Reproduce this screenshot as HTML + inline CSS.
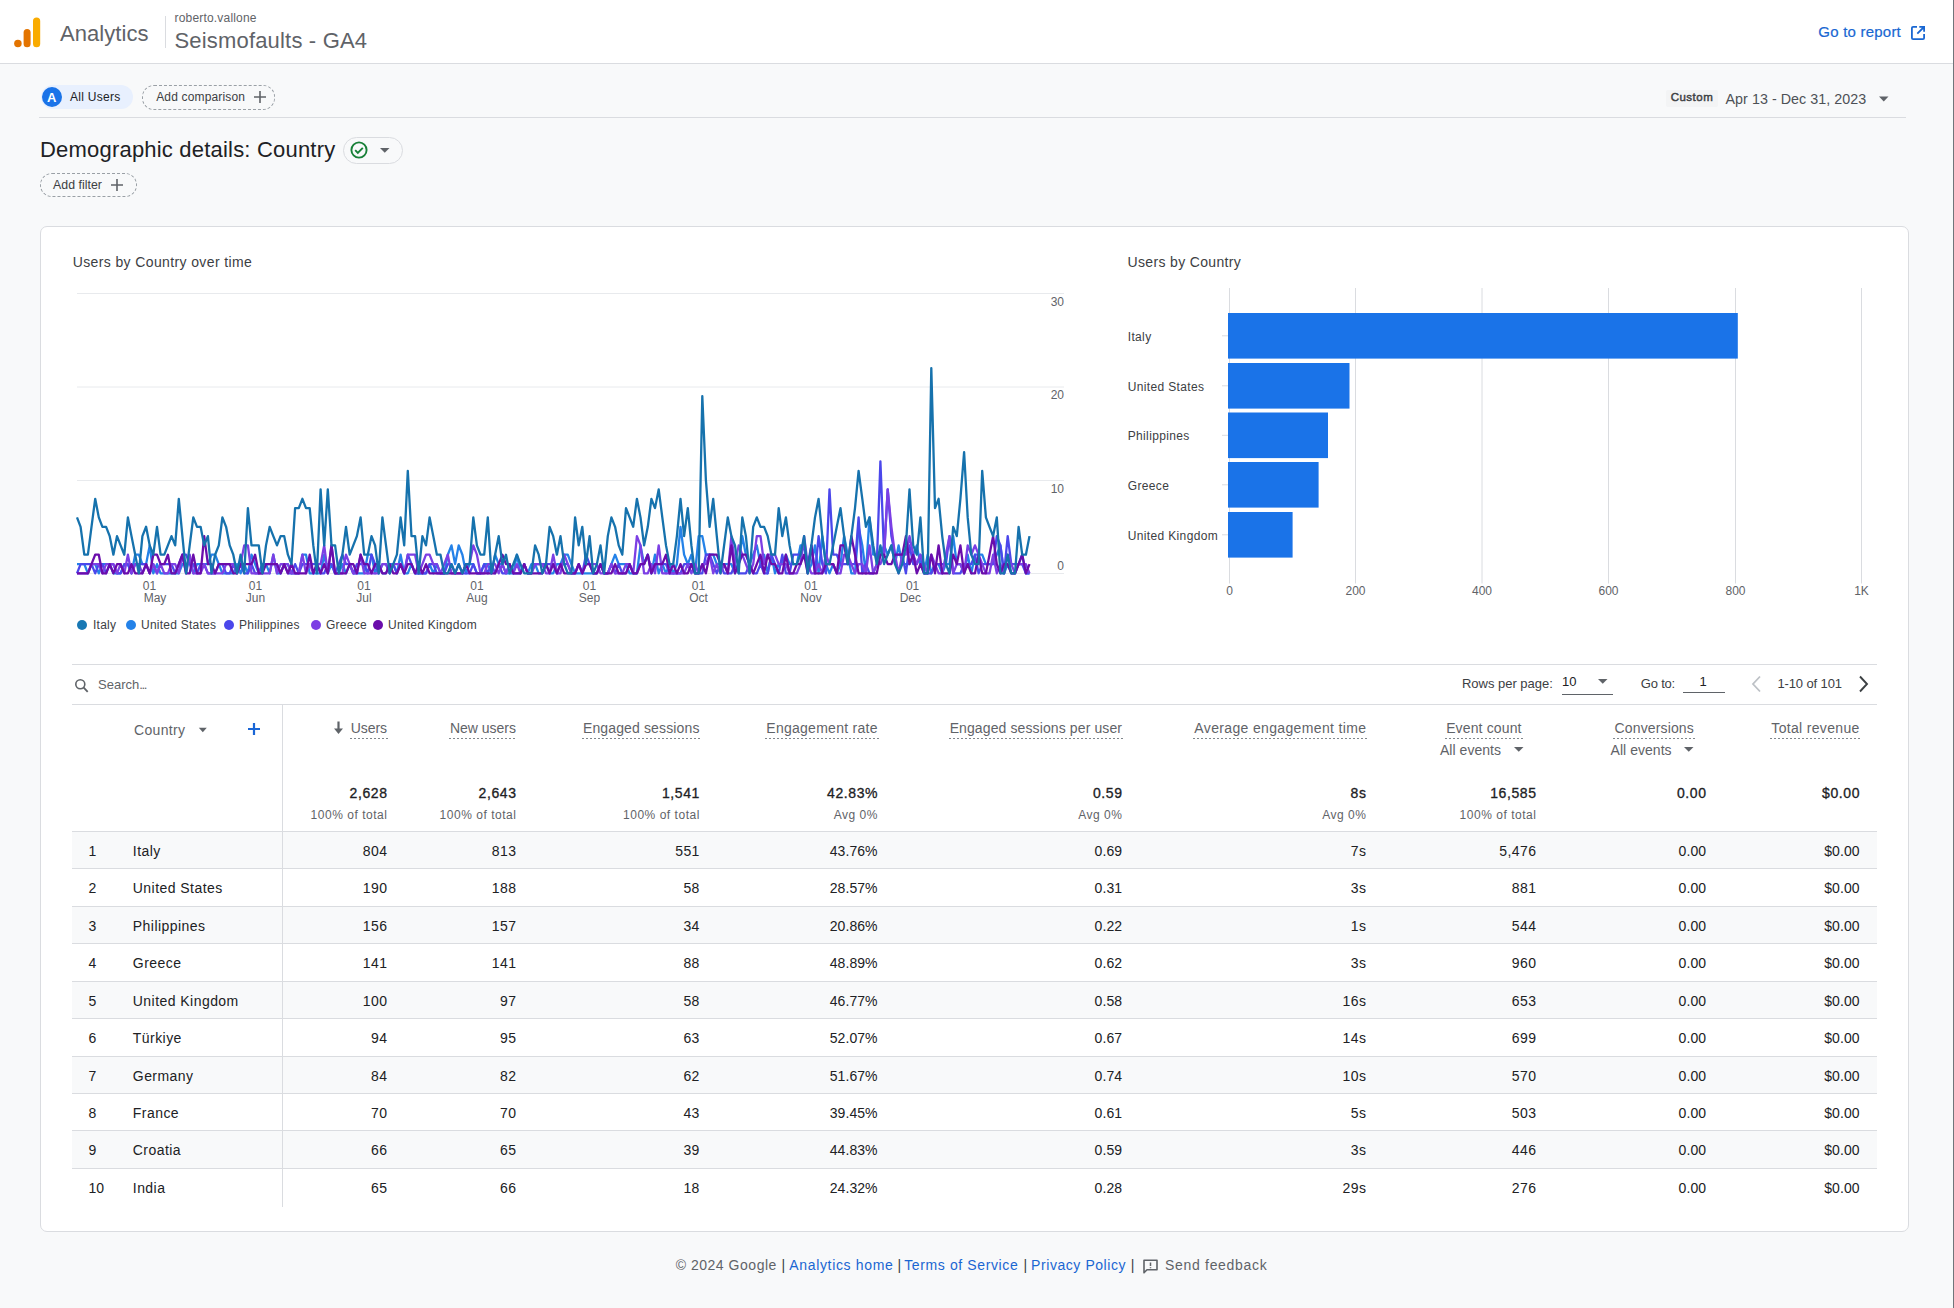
<!DOCTYPE html>
<html><head><meta charset="utf-8"><title>Demographic details: Country - Analytics</title>
<style>
html,body{margin:0;padding:0;}
body{width:1954px;height:1308px;overflow:hidden;position:relative;background:#f8f9fa;font-family:"Liberation Sans",sans-serif;}
.t{position:absolute;white-space:nowrap;}
#hdr{position:absolute;left:0;top:0;width:1954px;height:63px;background:#fff;border-bottom:1px solid #dadce0;}
</style></head><body>
<div id="hdr"></div>
<svg style="position:absolute;left:0;top:0" width="60" height="60">
<circle cx="17.9" cy="43.6" r="3.75" fill="#E37400"/>
<rect x="23.6" y="29" width="7" height="18.3" rx="3.5" fill="#E37400"/>
<rect x="33" y="17.5" width="7.2" height="29.8" rx="3.6" fill="#F9AB00"/>
</svg>
<div class="t" style="top:22.97px;font-size:22px;line-height:22px;color:#5f6368;font-weight:400;letter-spacing:0.052px;left:60.00px;">Analytics</div>

<div style="position:absolute;left:164.5px;top:16px;width:1px;height:32px;background:#dadce0"></div>
<div class="t" style="top:11.84px;font-size:12px;line-height:12px;color:#5f6368;font-weight:400;letter-spacing:0.188px;left:174.50px;">roberto.vallone</div>

<div class="t" style="top:30.17px;font-size:22px;line-height:22px;color:#5f6368;font-weight:400;letter-spacing:0.177px;left:174.50px;">Seismofaults - GA4</div>

<div class="t" style="top:24.40px;font-size:15px;line-height:15px;color:#1967d2;font-weight:400;letter-spacing:0.222px;left:1818.30px;-webkit-text-stroke:0.2px #1967d2;">Go to report</div>

<svg style="position:absolute;left:1910px;top:25px" width="16" height="16" viewBox="0 0 16 16">
<path d="M7 1.9H3.1a1.2 1.2 0 0 0-1.2 1.2v9.8a1.2 1.2 0 0 0 1.2 1.2h9.8a1.2 1.2 0 0 0 1.2-1.2V9" fill="none" stroke="#1967d2" stroke-width="1.8"/>
<path d="M9.3 1.9h4.8v4.8M14 2L7.3 8.7" fill="none" stroke="#1967d2" stroke-width="1.8"/>
</svg>
<div style="position:absolute;left:1953px;top:0;width:1px;height:1308px;background:#70757a"></div>
<div style="position:absolute;left:41px;top:85px;width:92px;height:24px;border-radius:12px;background:#e8f0fe"></div>
<div style="position:absolute;left:41.8px;top:87.2px;width:20px;height:20px;border-radius:10px;background:#1a73e8"></div>
<div class="t" style="top:90.99px;font-size:13px;line-height:13px;color:#ffffff;font-weight:700;left:-448.20px;width:1000px;text-align:center;">A</div>

<div class="t" style="top:91.14px;font-size:12px;line-height:12px;color:#202124;font-weight:400;letter-spacing:0.277px;left:70.00px;">All Users</div>

<div style="position:absolute;left:142px;top:85px;width:131px;height:23px;border-radius:12px;border:1px dashed #9aa0a6"></div>
<div class="t" style="top:91.14px;font-size:12px;line-height:12px;color:#3c4043;font-weight:400;letter-spacing:0.163px;left:156.20px;">Add comparison</div>

<svg style="position:absolute;left:253px;top:90px" width="14" height="14"><path d="M7 1v12M1 7h12" stroke="#5f6368" stroke-width="1.6"/></svg>
<div style="position:absolute;left:39px;top:117px;width:1867px;height:1px;background:#dadce0"></div>
<div style="position:absolute;left:1666px;top:89.5px;width:52px;height:17.5px;border-radius:2px;background:#f3f4f5"></div>
<div class="t" style="top:91.66px;font-size:11.5px;line-height:11.5px;color:#3c4043;font-weight:400;letter-spacing:0.480px;left:1670.70px;-webkit-text-stroke:0.45px #3c4043;">Custom</div>

<div class="t" style="top:92.09px;font-size:14.3px;line-height:14.3px;color:#4d5156;font-weight:400;letter-spacing:0.042px;left:1725.50px;">Apr 13 - Dec 31, 2023</div>

<svg style="position:absolute;left:1878px;top:95px" width="12" height="8"><path d="M1 1.5h9.5L5.75 6.5z" fill="#5f6368"/></svg>
<div class="t" style="top:139.37px;font-size:22px;line-height:22px;color:#202124;font-weight:400;letter-spacing:0.200px;left:40.00px;">Demographic details: Country</div>

<div style="position:absolute;left:342.5px;top:136.5px;width:60px;height:27.5px;border-radius:14px;border:1px solid #dadce0;box-sizing:border-box"></div>
<svg style="position:absolute;left:349px;top:140px" width="20" height="20" viewBox="0 0 20 20">
<circle cx="10" cy="10" r="7.6" fill="none" stroke="#188038" stroke-width="1.9"/>
<path d="M6.2 10.2l2.6 2.6 5-5" fill="none" stroke="#188038" stroke-width="1.9"/></svg>
<svg style="position:absolute;left:379px;top:147px" width="12" height="7"><path d="M1 1h9.5L5.75 5.8z" fill="#5f6368"/></svg>
<div style="position:absolute;left:40px;top:173px;width:95px;height:21.5px;border-radius:12px;border:1px dashed #9aa0a6"></div>
<div class="t" style="top:179.49px;font-size:12.3px;line-height:12.3px;color:#3c4043;font-weight:400;letter-spacing:0.046px;left:53.00px;">Add filter</div>

<svg style="position:absolute;left:110px;top:178px" width="14" height="14"><path d="M7 1v12M1 7h12" stroke="#5f6368" stroke-width="1.6"/></svg>
<div style="position:absolute;left:40px;top:226px;width:1869px;height:1006px;box-sizing:border-box;border:1px solid #dadce0;border-radius:7px;background:#fff"></div>
<div class="t" style="top:254.95px;font-size:14px;line-height:14px;color:#3c4043;font-weight:400;letter-spacing:0.380px;left:72.70px;">Users by Country over time</div>

<div class="t" style="top:254.95px;font-size:14px;line-height:14px;color:#3c4043;font-weight:400;letter-spacing:0.347px;left:1127.50px;">Users by Country</div>

<svg style="position:absolute;left:0;top:0" width="1954" height="700">
<line x1="77" y1="293.5" x2="1064" y2="293.5" stroke="#e8eaed" stroke-width="1"/>
<line x1="77" y1="387" x2="1064" y2="387" stroke="#e8eaed" stroke-width="1"/>
<line x1="77" y1="480.5" x2="1064" y2="480.5" stroke="#e8eaed" stroke-width="1"/>
<line x1="77" y1="573.5" x2="1064" y2="573.5" stroke="#e8eaed" stroke-width="1"/>
<polyline points="77.0,564.1 80.6,564.1 84.3,564.1 87.9,573.4 91.5,564.1 95.2,564.1 98.8,573.4 102.4,564.1 106.1,564.1 109.7,564.1 113.4,573.4 117.0,573.4 120.6,573.4 124.3,564.1 127.9,564.1 131.5,573.4 135.2,554.7 138.8,554.7 142.4,564.1 146.1,564.1 149.7,545.4 153.3,573.4 157.0,564.1 160.6,573.4 164.3,573.4 167.9,573.4 171.5,573.4 175.2,573.4 178.8,573.4 182.4,564.1 186.1,564.1 189.7,564.1 193.3,573.4 197.0,564.1 200.6,564.1 204.2,564.1 207.9,564.1 211.5,554.7 215.1,554.7 218.8,564.1 222.4,573.4 226.1,573.4 229.7,573.4 233.3,573.4 237.0,564.1 240.6,573.4 244.2,564.1 247.9,573.4 251.5,554.7 255.1,564.1 258.8,573.4 262.4,564.1 266.0,564.1 269.7,573.4 273.3,554.7 277.0,573.4 280.6,573.4 284.2,564.1 287.9,564.1 291.5,573.4 295.1,573.4 298.8,573.4 302.4,554.7 306.0,554.7 309.7,573.4 313.3,573.4 316.9,573.4 320.6,573.4 324.2,554.7 327.8,573.4 331.5,564.1 335.1,573.4 338.8,573.4 342.4,564.1 346.0,573.4 349.7,564.1 353.3,573.4 356.9,573.4 360.6,573.4 364.2,573.4 367.8,554.7 371.5,554.7 375.1,573.4 378.7,564.1 382.4,573.4 386.0,573.4 389.7,564.1 393.3,564.1 396.9,573.4 400.6,554.7 404.2,573.4 407.8,573.4 411.5,564.1 415.1,573.4 418.7,573.4 422.4,573.4 426.0,573.4 429.6,564.1 433.3,573.4 436.9,564.1 440.5,573.4 444.2,573.4 447.8,554.7 451.5,545.4 455.1,564.1 458.7,545.4 462.4,554.7 466.0,573.4 469.6,564.1 473.3,564.1 476.9,573.4 480.5,573.4 484.2,564.1 487.8,564.1 491.4,573.4 495.1,554.7 498.7,564.1 502.4,564.1 506.0,573.4 509.6,573.4 513.3,573.4 516.9,554.7 520.5,573.4 524.2,564.1 527.8,573.4 531.4,564.1 535.1,564.1 538.7,573.4 542.3,573.4 546.0,564.1 549.6,573.4 553.2,573.4 556.9,564.1 560.5,564.1 564.2,554.7 567.8,554.7 571.4,564.1 575.1,573.4 578.7,573.4 582.3,573.4 586.0,573.4 589.6,573.4 593.2,573.4 596.9,573.4 600.5,564.1 604.1,573.4 607.8,573.4 611.4,564.1 615.1,554.7 618.7,564.1 622.3,564.1 626.0,564.1 629.6,573.4 633.2,573.4 636.9,573.4 640.5,545.4 644.1,564.1 647.8,554.7 651.4,573.4 655.0,554.7 658.7,573.4 662.3,564.1 666.0,573.4 669.6,564.1 673.2,573.4 676.9,564.1 680.5,526.8 684.1,554.7 687.8,564.1 691.4,554.7 695.0,573.4 698.7,536.1 702.3,536.1 705.9,554.7 709.6,554.7 713.2,554.7 716.8,564.1 720.5,564.1 724.1,564.1 727.8,564.1 731.4,564.1 735.0,573.4 738.7,564.1 742.3,536.1 745.9,554.7 749.6,564.1 753.2,554.7 756.8,545.4 760.5,564.1 764.1,554.7 767.7,573.4 771.4,554.7 775.0,573.4 778.7,564.1 782.3,564.1 785.9,554.7 789.6,564.1 793.2,564.1 796.8,564.1 800.5,545.4 804.1,545.4 807.7,573.4 811.4,564.1 815.0,545.4 818.6,573.4 822.3,536.1 825.9,564.1 829.5,573.4 833.2,564.1 836.8,573.4 840.5,564.1 844.1,536.1 847.7,554.7 851.4,573.4 855.0,573.4 858.6,526.8 862.3,545.4 865.9,573.4 869.5,517.4 873.2,554.7 876.8,554.7 880.4,554.7 884.1,545.4 887.7,554.7 891.4,545.4 895.0,564.1 898.6,545.4 902.3,564.1 905.9,564.1 909.5,564.1 913.2,554.7 916.8,545.4 920.4,564.1 924.1,573.4 927.7,554.7 931.3,573.4 935.0,564.1 938.6,564.1 942.2,573.4 945.9,564.1 949.5,564.1 953.2,536.1 956.8,564.1 960.4,564.1 964.1,573.4 967.7,554.7 971.3,573.4 975.0,554.7 978.6,554.7 982.2,554.7 985.9,564.1 989.5,564.1 993.1,564.1 996.8,554.7 1000.4,545.4 1004.1,573.4 1007.7,564.1 1011.3,573.4 1015.0,573.4 1018.6,564.1 1022.2,554.7 1025.9,573.4 1029.5,573.4" fill="none" stroke="#2482e8" stroke-width="2.3" stroke-linejoin="round"/>
<polyline points="77.0,573.4 80.6,564.1 84.3,564.1 87.9,564.1 91.5,564.1 95.2,573.4 98.8,564.1 102.4,564.1 106.1,573.4 109.7,564.1 113.4,564.1 117.0,573.4 120.6,573.4 124.3,564.1 127.9,564.1 131.5,573.4 135.2,564.1 138.8,564.1 142.4,564.1 146.1,564.1 149.7,573.4 153.3,564.1 157.0,573.4 160.6,564.1 164.3,564.1 167.9,564.1 171.5,564.1 175.2,573.4 178.8,564.1 182.4,554.7 186.1,554.7 189.7,564.1 193.3,564.1 197.0,573.4 200.6,564.1 204.2,564.1 207.9,573.4 211.5,573.4 215.1,573.4 218.8,564.1 222.4,564.1 226.1,573.4 229.7,573.4 233.3,564.1 237.0,573.4 240.6,564.1 244.2,573.4 247.9,573.4 251.5,564.1 255.1,573.4 258.8,573.4 262.4,564.1 266.0,564.1 269.7,564.1 273.3,564.1 277.0,564.1 280.6,573.4 284.2,564.1 287.9,573.4 291.5,573.4 295.1,564.1 298.8,573.4 302.4,564.1 306.0,564.1 309.7,564.1 313.3,564.1 316.9,564.1 320.6,573.4 324.2,573.4 327.8,564.1 331.5,564.1 335.1,573.4 338.8,564.1 342.4,554.7 346.0,564.1 349.7,564.1 353.3,573.4 356.9,564.1 360.6,564.1 364.2,564.1 367.8,573.4 371.5,554.7 375.1,564.1 378.7,573.4 382.4,564.1 386.0,564.1 389.7,573.4 393.3,564.1 396.9,573.4 400.6,564.1 404.2,573.4 407.8,554.7 411.5,564.1 415.1,573.4 418.7,573.4 422.4,573.4 426.0,573.4 429.6,564.1 433.3,564.1 436.9,573.4 440.5,573.4 444.2,573.4 447.8,564.1 451.5,564.1 455.1,573.4 458.7,564.1 462.4,573.4 466.0,573.4 469.6,573.4 473.3,564.1 476.9,573.4 480.5,573.4 484.2,564.1 487.8,573.4 491.4,564.1 495.1,573.4 498.7,564.1 502.4,573.4 506.0,573.4 509.6,564.1 513.3,573.4 516.9,573.4 520.5,573.4 524.2,564.1 527.8,573.4 531.4,573.4 535.1,564.1 538.7,564.1 542.3,564.1 546.0,564.1 549.6,564.1 553.2,564.1 556.9,573.4 560.5,564.1 564.2,564.1 567.8,564.1 571.4,573.4 575.1,573.4 578.7,564.1 582.3,573.4 586.0,554.7 589.6,564.1 593.2,573.4 596.9,573.4 600.5,564.1 604.1,573.4 607.8,573.4 611.4,564.1 615.1,573.4 618.7,564.1 622.3,573.4 626.0,573.4 629.6,564.1 633.2,573.4 636.9,573.4 640.5,564.1 644.1,564.1 647.8,554.7 651.4,573.4 655.0,564.1 658.7,564.1 662.3,564.1 666.0,564.1 669.6,573.4 673.2,573.4 676.9,573.4 680.5,573.4 684.1,564.1 687.8,564.1 691.4,564.1 695.0,573.4 698.7,573.4 702.3,573.4 705.9,554.7 709.6,554.7 713.2,564.1 716.8,573.4 720.5,564.1 724.1,573.4 727.8,573.4 731.4,573.4 735.0,564.1 738.7,573.4 742.3,573.4 745.9,573.4 749.6,564.1 753.2,573.4 756.8,573.4 760.5,564.1 764.1,573.4 767.7,573.4 771.4,554.7 775.0,564.1 778.7,573.4 782.3,554.7 785.9,573.4 789.6,573.4 793.2,554.7 796.8,554.7 800.5,554.7 804.1,545.4 807.7,564.1 811.4,545.4 815.0,573.4 818.6,536.1 822.3,564.1 825.9,573.4 829.5,489.4 833.2,554.7 836.8,554.7 840.5,564.1 844.1,564.1 847.7,564.1 851.4,564.1 855.0,564.1 858.6,517.4 862.3,573.4 865.9,564.1 869.5,573.4 873.2,573.4 876.8,564.1 880.4,461.4 884.1,554.7 887.7,489.4 891.4,536.1 895.0,554.7 898.6,554.7 902.3,554.7 905.9,573.4 909.5,545.4 913.2,564.1 916.8,564.1 920.4,554.7 924.1,573.4 927.7,573.4 931.3,573.4 935.0,564.1 938.6,564.1 942.2,564.1 945.9,564.1 949.5,536.1 953.2,573.4 956.8,573.4 960.4,573.4 964.1,564.1 967.7,564.1 971.3,564.1 975.0,554.7 978.6,573.4 982.2,564.1 985.9,564.1 989.5,564.1 993.1,564.1 996.8,536.1 1000.4,545.4 1004.1,573.4 1007.7,536.1 1011.3,564.1 1015.0,564.1 1018.6,564.1 1022.2,564.1 1025.9,573.4 1029.5,573.4" fill="none" stroke="#4b47eb" stroke-width="2.3" stroke-linejoin="round"/>
<polyline points="77.0,573.4 80.6,573.4 84.3,573.4 87.9,573.4 91.5,564.1 95.2,564.1 98.8,564.1 102.4,573.4 106.1,564.1 109.7,564.1 113.4,564.1 117.0,573.4 120.6,564.1 124.3,573.4 127.9,554.7 131.5,573.4 135.2,564.1 138.8,564.1 142.4,573.4 146.1,564.1 149.7,573.4 153.3,564.1 157.0,573.4 160.6,564.1 164.3,573.4 167.9,573.4 171.5,564.1 175.2,564.1 178.8,573.4 182.4,554.7 186.1,573.4 189.7,554.7 193.3,573.4 197.0,573.4 200.6,573.4 204.2,564.1 207.9,573.4 211.5,573.4 215.1,573.4 218.8,573.4 222.4,573.4 226.1,564.1 229.7,564.1 233.3,564.1 237.0,573.4 240.6,564.1 244.2,545.4 247.9,545.4 251.5,573.4 255.1,573.4 258.8,573.4 262.4,573.4 266.0,573.4 269.7,573.4 273.3,554.7 277.0,573.4 280.6,564.1 284.2,564.1 287.9,564.1 291.5,573.4 295.1,573.4 298.8,573.4 302.4,554.7 306.0,573.4 309.7,564.1 313.3,573.4 316.9,564.1 320.6,564.1 324.2,545.4 327.8,573.4 331.5,545.4 335.1,573.4 338.8,573.4 342.4,573.4 346.0,554.7 349.7,564.1 353.3,573.4 356.9,573.4 360.6,554.7 364.2,573.4 367.8,573.4 371.5,573.4 375.1,573.4 378.7,573.4 382.4,564.1 386.0,564.1 389.7,573.4 393.3,564.1 396.9,564.1 400.6,564.1 404.2,573.4 407.8,554.7 411.5,554.7 415.1,554.7 418.7,573.4 422.4,564.1 426.0,554.7 429.6,554.7 433.3,564.1 436.9,564.1 440.5,573.4 444.2,564.1 447.8,554.7 451.5,573.4 455.1,573.4 458.7,573.4 462.4,573.4 466.0,564.1 469.6,564.1 473.3,545.4 476.9,554.7 480.5,573.4 484.2,573.4 487.8,564.1 491.4,564.1 495.1,564.1 498.7,573.4 502.4,564.1 506.0,573.4 509.6,564.1 513.3,573.4 516.9,564.1 520.5,573.4 524.2,564.1 527.8,573.4 531.4,573.4 535.1,564.1 538.7,564.1 542.3,564.1 546.0,573.4 549.6,573.4 553.2,554.7 556.9,573.4 560.5,573.4 564.2,554.7 567.8,564.1 571.4,573.4 575.1,573.4 578.7,564.1 582.3,573.4 586.0,564.1 589.6,564.1 593.2,564.1 596.9,564.1 600.5,573.4 604.1,573.4 607.8,573.4 611.4,564.1 615.1,573.4 618.7,573.4 622.3,573.4 626.0,564.1 629.6,564.1 633.2,573.4 636.9,536.1 640.5,545.4 644.1,573.4 647.8,573.4 651.4,564.1 655.0,573.4 658.7,545.4 662.3,573.4 666.0,573.4 669.6,573.4 673.2,573.4 676.9,573.4 680.5,573.4 684.1,573.4 687.8,564.1 691.4,573.4 695.0,564.1 698.7,573.4 702.3,564.1 705.9,564.1 709.6,554.7 713.2,573.4 716.8,564.1 720.5,573.4 724.1,564.1 727.8,573.4 731.4,536.1 735.0,564.1 738.7,545.4 742.3,554.7 745.9,564.1 749.6,573.4 753.2,564.1 756.8,536.1 760.5,536.1 764.1,564.1 767.7,554.7 771.4,554.7 775.0,554.7 778.7,564.1 782.3,564.1 785.9,564.1 789.6,573.4 793.2,573.4 796.8,573.4 800.5,564.1 804.1,536.1 807.7,564.1 811.4,573.4 815.0,573.4 818.6,564.1 822.3,573.4 825.9,554.7 829.5,564.1 833.2,564.1 836.8,573.4 840.5,573.4 844.1,554.7 847.7,554.7 851.4,564.1 855.0,573.4 858.6,564.1 862.3,564.1 865.9,573.4 869.5,545.4 873.2,573.4 876.8,564.1 880.4,564.1 884.1,554.7 887.7,489.4 891.4,526.8 895.0,554.7 898.6,573.4 902.3,554.7 905.9,554.7 909.5,536.1 913.2,554.7 916.8,564.1 920.4,554.7 924.1,564.1 927.7,573.4 931.3,554.7 935.0,564.1 938.6,573.4 942.2,573.4 945.9,554.7 949.5,536.1 953.2,573.4 956.8,564.1 960.4,564.1 964.1,573.4 967.7,545.4 971.3,554.7 975.0,545.4 978.6,554.7 982.2,564.1 985.9,573.4 989.5,573.4 993.1,554.7 996.8,573.4 1000.4,564.1 1004.1,573.4 1007.7,554.7 1011.3,564.1 1015.0,573.4 1018.6,564.1 1022.2,564.1 1025.9,564.1 1029.5,573.4" fill="none" stroke="#7c3fe4" stroke-width="2.3" stroke-linejoin="round"/>
<polyline points="77.0,573.4 80.6,573.4 84.3,573.4 87.9,573.4 91.5,564.1 95.2,554.7 98.8,554.7 102.4,573.4 106.1,573.4 109.7,564.1 113.4,573.4 117.0,564.1 120.6,564.1 124.3,573.4 127.9,573.4 131.5,564.1 135.2,573.4 138.8,573.4 142.4,573.4 146.1,564.1 149.7,573.4 153.3,554.7 157.0,554.7 160.6,564.1 164.3,564.1 167.9,554.7 171.5,573.4 175.2,573.4 178.8,564.1 182.4,554.7 186.1,573.4 189.7,573.4 193.3,554.7 197.0,573.4 200.6,573.4 204.2,536.1 207.9,564.1 211.5,564.1 215.1,573.4 218.8,564.1 222.4,564.1 226.1,564.1 229.7,564.1 233.3,573.4 237.0,573.4 240.6,564.1 244.2,564.1 247.9,564.1 251.5,564.1 255.1,554.7 258.8,573.4 262.4,573.4 266.0,564.1 269.7,564.1 273.3,564.1 277.0,564.1 280.6,573.4 284.2,564.1 287.9,573.4 291.5,564.1 295.1,573.4 298.8,573.4 302.4,573.4 306.0,573.4 309.7,554.7 313.3,573.4 316.9,564.1 320.6,573.4 324.2,564.1 327.8,573.4 331.5,545.4 335.1,573.4 338.8,573.4 342.4,573.4 346.0,573.4 349.7,564.1 353.3,564.1 356.9,573.4 360.6,554.7 364.2,564.1 367.8,564.1 371.5,573.4 375.1,564.1 378.7,564.1 382.4,573.4 386.0,573.4 389.7,564.1 393.3,573.4 396.9,573.4 400.6,564.1 404.2,573.4 407.8,564.1 411.5,564.1 415.1,573.4 418.7,564.1 422.4,573.4 426.0,564.1 429.6,573.4 433.3,573.4 436.9,573.4 440.5,573.4 444.2,573.4 447.8,573.4 451.5,573.4 455.1,573.4 458.7,573.4 462.4,573.4 466.0,564.1 469.6,573.4 473.3,573.4 476.9,573.4 480.5,573.4 484.2,573.4 487.8,573.4 491.4,573.4 495.1,573.4 498.7,564.1 502.4,554.7 506.0,564.1 509.6,564.1 513.3,573.4 516.9,573.4 520.5,573.4 524.2,564.1 527.8,573.4 531.4,573.4 535.1,573.4 538.7,573.4 542.3,573.4 546.0,564.1 549.6,573.4 553.2,564.1 556.9,573.4 560.5,564.1 564.2,573.4 567.8,573.4 571.4,573.4 575.1,573.4 578.7,564.1 582.3,573.4 586.0,564.1 589.6,564.1 593.2,573.4 596.9,573.4 600.5,564.1 604.1,573.4 607.8,573.4 611.4,573.4 615.1,564.1 618.7,573.4 622.3,573.4 626.0,573.4 629.6,564.1 633.2,573.4 636.9,573.4 640.5,564.1 644.1,564.1 647.8,554.7 651.4,573.4 655.0,564.1 658.7,564.1 662.3,564.1 666.0,554.7 669.6,573.4 673.2,564.1 676.9,573.4 680.5,564.1 684.1,573.4 687.8,573.4 691.4,564.1 695.0,573.4 698.7,573.4 702.3,564.1 705.9,573.4 709.6,554.7 713.2,554.7 716.8,554.7 720.5,564.1 724.1,564.1 727.8,573.4 731.4,545.4 735.0,573.4 738.7,564.1 742.3,554.7 745.9,554.7 749.6,564.1 753.2,573.4 756.8,564.1 760.5,554.7 764.1,573.4 767.7,554.7 771.4,564.1 775.0,564.1 778.7,573.4 782.3,573.4 785.9,554.7 789.6,573.4 793.2,573.4 796.8,564.1 800.5,564.1 804.1,554.7 807.7,573.4 811.4,545.4 815.0,573.4 818.6,573.4 822.3,573.4 825.9,564.1 829.5,564.1 833.2,564.1 836.8,573.4 840.5,545.4 844.1,545.4 847.7,564.1 851.4,536.1 855.0,554.7 858.6,573.4 862.3,573.4 865.9,573.4 869.5,573.4 873.2,573.4 876.8,573.4 880.4,554.7 884.1,554.7 887.7,564.1 891.4,564.1 895.0,554.7 898.6,554.7 902.3,554.7 905.9,536.1 909.5,564.1 913.2,554.7 916.8,573.4 920.4,564.1 924.1,573.4 927.7,573.4 931.3,554.7 935.0,573.4 938.6,545.4 942.2,573.4 945.9,573.4 949.5,573.4 953.2,554.7 956.8,564.1 960.4,545.4 964.1,573.4 967.7,564.1 971.3,573.4 975.0,573.4 978.6,554.7 982.2,573.4 985.9,573.4 989.5,554.7 993.1,536.1 996.8,564.1 1000.4,573.4 1004.1,564.1 1007.7,564.1 1011.3,573.4 1015.0,573.4 1018.6,564.1 1022.2,554.7 1025.9,573.4 1029.5,564.1" fill="none" stroke="#6a0dab" stroke-width="2.3" stroke-linejoin="round"/>
<polyline points="77.0,517.4 80.6,526.8 84.3,554.7 87.9,554.7 91.5,526.8 95.2,498.8 98.8,517.4 102.4,526.8 106.1,526.8 109.7,536.1 113.4,554.7 117.0,536.1 120.6,545.4 124.3,554.7 127.9,517.4 131.5,536.1 135.2,554.7 138.8,573.4 142.4,536.1 146.1,526.8 149.7,545.4 153.3,554.7 157.0,526.8 160.6,554.7 164.3,554.7 167.9,545.4 171.5,536.1 175.2,545.4 178.8,498.8 182.4,536.1 186.1,573.4 189.7,545.4 193.3,517.4 197.0,526.8 200.6,526.8 204.2,545.4 207.9,536.1 211.5,573.4 215.1,554.7 218.8,545.4 222.4,517.4 226.1,526.8 229.7,545.4 233.3,554.7 237.0,573.4 240.6,554.7 244.2,573.4 247.9,508.1 251.5,545.4 255.1,545.4 258.8,545.4 262.4,573.4 266.0,545.4 269.7,526.8 273.3,536.1 277.0,545.4 280.6,536.1 284.2,536.1 287.9,554.7 291.5,564.1 295.1,508.1 298.8,508.1 302.4,498.8 306.0,508.1 309.7,508.1 313.3,545.4 316.9,573.4 320.6,489.4 324.2,545.4 327.8,489.4 331.5,545.4 335.1,545.4 338.8,573.4 342.4,554.7 346.0,526.8 349.7,554.7 353.3,545.4 356.9,536.1 360.6,517.4 364.2,554.7 367.8,554.7 371.5,536.1 375.1,545.4 378.7,573.4 382.4,517.4 386.0,545.4 389.7,573.4 393.3,564.1 396.9,554.7 400.6,517.4 404.2,545.4 407.8,470.8 411.5,536.1 415.1,536.1 418.7,573.4 422.4,536.1 426.0,545.4 429.6,517.4 433.3,536.1 436.9,554.7 440.5,554.7 444.2,573.4 447.8,573.4 451.5,564.1 455.1,573.4 458.7,564.1 462.4,573.4 466.0,564.1 469.6,564.1 473.3,517.4 476.9,545.4 480.5,554.7 484.2,554.7 487.8,517.4 491.4,573.4 495.1,554.7 498.7,536.1 502.4,564.1 506.0,554.7 509.6,573.4 513.3,564.1 516.9,554.7 520.5,564.1 524.2,573.4 527.8,573.4 531.4,573.4 535.1,545.4 538.7,554.7 542.3,573.4 546.0,564.1 549.6,526.8 553.2,536.1 556.9,554.7 560.5,536.1 564.2,564.1 567.8,573.4 571.4,573.4 575.1,517.4 578.7,545.4 582.3,526.8 586.0,564.1 589.6,536.1 593.2,573.4 596.9,564.1 600.5,545.4 604.1,573.4 607.8,536.1 611.4,517.4 615.1,526.8 618.7,545.4 622.3,554.7 626.0,508.1 629.6,517.4 633.2,526.8 636.9,498.8 640.5,517.4 644.1,545.4 647.8,526.8 651.4,498.8 655.0,508.1 658.7,489.4 662.3,517.4 666.0,545.4 669.6,564.1 673.2,564.1 676.9,536.1 680.5,498.8 684.1,536.1 687.8,508.1 691.4,545.4 695.0,573.4 698.7,573.4 702.3,396.1 705.9,480.1 709.6,526.8 713.2,498.8 716.8,536.1 720.5,573.4 724.1,545.4 727.8,517.4 731.4,536.1 735.0,545.4 738.7,573.4 742.3,517.4 745.9,536.1 749.6,573.4 753.2,526.8 756.8,517.4 760.5,526.8 764.1,526.8 767.7,536.1 771.4,554.7 775.0,554.7 778.7,508.1 782.3,536.1 785.9,517.4 789.6,545.4 793.2,564.1 796.8,564.1 800.5,554.7 804.1,536.1 807.7,573.4 811.4,545.4 815.0,517.4 818.6,498.8 822.3,536.1 825.9,564.1 829.5,564.1 833.2,545.4 836.8,526.8 840.5,508.1 844.1,536.1 847.7,564.1 851.4,536.1 855.0,508.1 858.6,470.8 862.3,498.8 865.9,526.8 869.5,517.4 873.2,545.4 876.8,564.1 880.4,545.4 884.1,564.1 887.7,554.7 891.4,545.4 895.0,564.1 898.6,573.4 902.3,564.1 905.9,545.4 909.5,489.4 913.2,545.4 916.8,554.7 920.4,517.4 924.1,573.4 927.7,573.4 931.3,368.1 935.0,508.1 938.6,498.8 942.2,536.1 945.9,564.1 949.5,573.4 953.2,526.8 956.8,536.1 960.4,498.8 964.1,452.1 967.7,517.4 971.3,554.7 975.0,564.1 978.6,564.1 982.2,470.8 985.9,517.4 989.5,526.8 993.1,536.1 996.8,517.4 1000.4,573.4 1004.1,573.4 1007.7,554.7 1011.3,573.4 1015.0,573.4 1018.6,526.8 1022.2,554.7 1025.9,554.7 1029.5,536.1" fill="none" stroke="#1672ad" stroke-width="2.3" stroke-linejoin="round"/>
</svg>
<div class="t" style="top:295.64px;font-size:12px;line-height:12px;color:#5f6368;font-weight:400;right:890.00px;text-align:right;">30</div>

<div class="t" style="top:389.14px;font-size:12px;line-height:12px;color:#5f6368;font-weight:400;right:890.00px;text-align:right;">20</div>

<div class="t" style="top:482.64px;font-size:12px;line-height:12px;color:#5f6368;font-weight:400;right:890.00px;text-align:right;">10</div>

<div class="t" style="top:559.84px;font-size:12px;line-height:12px;color:#5f6368;font-weight:400;right:890.00px;text-align:right;">0</div>

<div class="t" style="top:579.84px;font-size:12px;line-height:12px;color:#5f6368;font-weight:400;left:-350.50px;width:1000px;text-align:center;">01</div>

<div class="t" style="top:592.34px;font-size:12px;line-height:12px;color:#5f6368;font-weight:400;left:-345.00px;width:1000px;text-align:center;">May</div>

<div class="t" style="top:579.84px;font-size:12px;line-height:12px;color:#5f6368;font-weight:400;left:-244.50px;width:1000px;text-align:center;">01</div>

<div class="t" style="top:592.34px;font-size:12px;line-height:12px;color:#5f6368;font-weight:400;left:-244.50px;width:1000px;text-align:center;">Jun</div>

<div class="t" style="top:579.84px;font-size:12px;line-height:12px;color:#5f6368;font-weight:400;left:-136.00px;width:1000px;text-align:center;">01</div>

<div class="t" style="top:592.34px;font-size:12px;line-height:12px;color:#5f6368;font-weight:400;left:-136.00px;width:1000px;text-align:center;">Jul</div>

<div class="t" style="top:579.84px;font-size:12px;line-height:12px;color:#5f6368;font-weight:400;left:-23.00px;width:1000px;text-align:center;">01</div>

<div class="t" style="top:592.34px;font-size:12px;line-height:12px;color:#5f6368;font-weight:400;left:-23.00px;width:1000px;text-align:center;">Aug</div>

<div class="t" style="top:579.84px;font-size:12px;line-height:12px;color:#5f6368;font-weight:400;left:89.50px;width:1000px;text-align:center;">01</div>

<div class="t" style="top:592.34px;font-size:12px;line-height:12px;color:#5f6368;font-weight:400;left:89.50px;width:1000px;text-align:center;">Sep</div>

<div class="t" style="top:579.84px;font-size:12px;line-height:12px;color:#5f6368;font-weight:400;left:198.50px;width:1000px;text-align:center;">01</div>

<div class="t" style="top:592.34px;font-size:12px;line-height:12px;color:#5f6368;font-weight:400;left:198.50px;width:1000px;text-align:center;">Oct</div>

<div class="t" style="top:579.84px;font-size:12px;line-height:12px;color:#5f6368;font-weight:400;left:311.00px;width:1000px;text-align:center;">01</div>

<div class="t" style="top:592.34px;font-size:12px;line-height:12px;color:#5f6368;font-weight:400;left:311.00px;width:1000px;text-align:center;">Nov</div>

<div class="t" style="top:579.84px;font-size:12px;line-height:12px;color:#5f6368;font-weight:400;left:412.60px;width:1000px;text-align:center;">01</div>

<div class="t" style="top:592.34px;font-size:12px;line-height:12px;color:#5f6368;font-weight:400;left:410.30px;width:1000px;text-align:center;">Dec</div>

<div style="position:absolute;left:77px;top:619.9px;width:10px;height:10px;border-radius:5px;background:#1878b4"></div>
<div class="t" style="top:618.54px;font-size:12px;line-height:12px;color:#3c4043;font-weight:400;letter-spacing:0.250px;left:93.00px;">Italy</div>

<div style="position:absolute;left:126px;top:619.9px;width:10px;height:10px;border-radius:5px;background:#2482e8"></div>
<div class="t" style="top:618.54px;font-size:12px;line-height:12px;color:#3c4043;font-weight:400;letter-spacing:0.250px;left:141.00px;">United States</div>

<div style="position:absolute;left:224px;top:619.9px;width:10px;height:10px;border-radius:5px;background:#4b47eb"></div>
<div class="t" style="top:618.54px;font-size:12px;line-height:12px;color:#3c4043;font-weight:400;letter-spacing:0.250px;left:239.00px;">Philippines</div>

<div style="position:absolute;left:311px;top:619.9px;width:10px;height:10px;border-radius:5px;background:#7c3fe4"></div>
<div class="t" style="top:618.54px;font-size:12px;line-height:12px;color:#3c4043;font-weight:400;letter-spacing:0.250px;left:326.00px;">Greece</div>

<div style="position:absolute;left:373px;top:619.9px;width:10px;height:10px;border-radius:5px;background:#6a0dab"></div>
<div class="t" style="top:618.54px;font-size:12px;line-height:12px;color:#3c4043;font-weight:400;letter-spacing:0.250px;left:388.00px;">United Kingdom</div>

<svg style="position:absolute;left:0;top:0" width="1954" height="700">
<line x1="1229.5" y1="288" x2="1229.5" y2="583.5" stroke="#dadce0" stroke-width="1"/>
<line x1="1355.5" y1="288" x2="1355.5" y2="583.5" stroke="#dadce0" stroke-width="1"/>
<line x1="1482" y1="288" x2="1482" y2="583.5" stroke="#dadce0" stroke-width="1"/>
<line x1="1608.5" y1="288" x2="1608.5" y2="583.5" stroke="#dadce0" stroke-width="1"/>
<line x1="1735.5" y1="288" x2="1735.5" y2="583.5" stroke="#dadce0" stroke-width="1"/>
<line x1="1861.5" y1="288" x2="1861.5" y2="583.5" stroke="#dadce0" stroke-width="1"/>
<rect x="1228" y="313" width="509.8" height="45.6" fill="#1a73e8"/>
<line x1="1222" y1="335.8" x2="1228" y2="335.8" stroke="#dadce0" stroke-width="1"/>
<rect x="1228" y="363" width="121.5" height="45.6" fill="#1a73e8"/>
<line x1="1222" y1="385.8" x2="1228" y2="385.8" stroke="#dadce0" stroke-width="1"/>
<rect x="1228" y="412.5" width="100.0" height="45.6" fill="#1a73e8"/>
<line x1="1222" y1="435.3" x2="1228" y2="435.3" stroke="#dadce0" stroke-width="1"/>
<rect x="1228" y="462" width="90.6" height="45.6" fill="#1a73e8"/>
<line x1="1222" y1="484.8" x2="1228" y2="484.8" stroke="#dadce0" stroke-width="1"/>
<rect x="1228" y="512" width="64.6" height="45.6" fill="#1a73e8"/>
<line x1="1222" y1="534.8" x2="1228" y2="534.8" stroke="#dadce0" stroke-width="1"/>
</svg>
<div class="t" style="top:330.64px;font-size:12px;line-height:12px;color:#3c4043;font-weight:400;letter-spacing:0.360px;left:1127.70px;">Italy</div>

<div class="t" style="top:380.64px;font-size:12px;line-height:12px;color:#3c4043;font-weight:400;letter-spacing:0.360px;left:1127.70px;">United States</div>

<div class="t" style="top:430.14px;font-size:12px;line-height:12px;color:#3c4043;font-weight:400;letter-spacing:0.360px;left:1127.70px;">Philippines</div>

<div class="t" style="top:479.64px;font-size:12px;line-height:12px;color:#3c4043;font-weight:400;letter-spacing:0.360px;left:1127.70px;">Greece</div>

<div class="t" style="top:529.64px;font-size:12px;line-height:12px;color:#3c4043;font-weight:400;letter-spacing:0.360px;left:1127.70px;">United Kingdom</div>

<div class="t" style="top:584.54px;font-size:12px;line-height:12px;color:#5f6368;font-weight:400;left:729.50px;width:1000px;text-align:center;">0</div>

<div class="t" style="top:584.54px;font-size:12px;line-height:12px;color:#5f6368;font-weight:400;left:855.50px;width:1000px;text-align:center;">200</div>

<div class="t" style="top:584.54px;font-size:12px;line-height:12px;color:#5f6368;font-weight:400;left:982.00px;width:1000px;text-align:center;">400</div>

<div class="t" style="top:584.54px;font-size:12px;line-height:12px;color:#5f6368;font-weight:400;left:1108.50px;width:1000px;text-align:center;">600</div>

<div class="t" style="top:584.54px;font-size:12px;line-height:12px;color:#5f6368;font-weight:400;left:1235.50px;width:1000px;text-align:center;">800</div>

<div class="t" style="top:584.54px;font-size:12px;line-height:12px;color:#5f6368;font-weight:400;left:1361.50px;width:1000px;text-align:center;">1K</div>

<div style="position:absolute;left:72px;top:663.5px;width:1805px;height:1px;background:#dadce0"></div>
<svg style="position:absolute;left:74px;top:678px" width="15" height="15" viewBox="0 0 15 15"><circle cx="6.3" cy="6.2" r="4.5" fill="none" stroke="#5f6368" stroke-width="1.6"/><path d="M9.5 9.4l4.2 4.4" stroke="#5f6368" stroke-width="1.8"/></svg>
<div class="t" style="top:677.99px;font-size:13px;line-height:13px;color:#5f6368;font-weight:400;left:98.00px;">Search<span style="letter-spacing:-1.3px">...</span></div>

<div class="t" style="top:676.99px;font-size:13px;line-height:13px;color:#3c4043;font-weight:400;letter-spacing:-0.004px;left:1461.90px;">Rows per page:</div>

<div class="t" style="top:674.99px;font-size:13px;line-height:13px;color:#202124;font-weight:400;left:1562.00px;">10</div>

<svg style="position:absolute;left:1597px;top:678px" width="12" height="7"><path d="M1 1h9.5L5.75 5.8z" fill="#5f6368"/></svg>
<div style="position:absolute;left:1561.5px;top:693.5px;width:51px;height:1px;background:#5f6368"></div>
<div class="t" style="top:676.99px;font-size:13px;line-height:13px;color:#3c4043;font-weight:400;letter-spacing:-0.201px;left:1640.80px;">Go to:</div>

<div class="t" style="top:674.99px;font-size:13px;line-height:13px;color:#202124;font-weight:400;left:1203.00px;width:1000px;text-align:center;">1</div>

<div style="position:absolute;left:1683px;top:691.8px;width:42px;height:1px;background:#5f6368"></div>
<svg style="position:absolute;left:1748px;top:674px" width="16" height="20"><path d="M12 2.5L5 10l7 7.5" fill="none" stroke="#bdc1c6" stroke-width="1.8"/></svg>
<div class="t" style="top:676.99px;font-size:13px;line-height:13px;color:#3c4043;font-weight:400;letter-spacing:-0.116px;left:1777.40px;">1-10 of 101</div>

<svg style="position:absolute;left:1856px;top:674px" width="16" height="20"><path d="M4 2.5L11 10l-7 7.5" fill="none" stroke="#3c4043" stroke-width="1.9"/></svg>
<div style="position:absolute;left:72px;top:703.8px;width:1805px;height:1px;background:#dadce0"></div>
<div class="t" style="top:723.15px;font-size:14px;line-height:14px;color:#5f6368;font-weight:400;letter-spacing:0.340px;left:134.00px;">Country</div>

<svg style="position:absolute;left:198px;top:727px" width="10" height="6"><path d="M0.8 0.8h8L4.8 5.2z" fill="#5f6368"/></svg>
<svg style="position:absolute;left:247px;top:722px" width="14" height="14"><path d="M7 1v12M1 7h12" stroke="#1a66d6" stroke-width="2.2"/></svg>
<svg style="position:absolute;left:332px;top:721px" width="13" height="15"><path d="M6.5 0.5v8" stroke="#5f6368" stroke-width="2.2"/><path d="M2 7.5h9L6.5 13z" fill="#5f6368"/></svg>
<div class="t" style="top:721.15px;font-size:14px;line-height:14px;color:#5f6368;font-weight:400;letter-spacing:-0.072px;right:1567.07px;text-align:right;">Users</div>

<div style="position:absolute;left:349.8px;top:737.5px;width:38.2px;height:1px;background:repeating-linear-gradient(to right,#80868b 0 2px,transparent 2px 4px)"></div>
<div class="t" style="top:721.15px;font-size:14px;line-height:14px;color:#5f6368;font-weight:400;letter-spacing:-0.004px;right:1438.00px;text-align:right;">New users</div>

<div style="position:absolute;left:448.9px;top:737.5px;width:68.1px;height:1px;background:repeating-linear-gradient(to right,#80868b 0 2px,transparent 2px 4px)"></div>
<div class="t" style="top:721.15px;font-size:14px;line-height:14px;color:#5f6368;font-weight:400;letter-spacing:0.136px;right:1254.46px;text-align:right;">Engaged sessions</div>

<div style="position:absolute;left:581.8px;top:737.5px;width:118.6px;height:1px;background:repeating-linear-gradient(to right,#80868b 0 2px,transparent 2px 4px)"></div>
<div class="t" style="top:721.15px;font-size:14px;line-height:14px;color:#5f6368;font-weight:400;letter-spacing:0.273px;right:1076.23px;text-align:right;">Engagement rate</div>

<div style="position:absolute;left:765.0px;top:737.5px;width:113.5px;height:1px;background:repeating-linear-gradient(to right,#80868b 0 2px,transparent 2px 4px)"></div>
<div class="t" style="top:721.15px;font-size:14px;line-height:14px;color:#5f6368;font-weight:400;letter-spacing:0.113px;right:831.89px;text-align:right;">Engaged sessions per user</div>

<div style="position:absolute;left:948.5px;top:737.5px;width:174.5px;height:1px;background:repeating-linear-gradient(to right,#80868b 0 2px,transparent 2px 4px)"></div>
<div class="t" style="top:721.15px;font-size:14px;line-height:14px;color:#5f6368;font-weight:400;letter-spacing:0.349px;right:587.65px;text-align:right;">Average engagement time</div>

<div style="position:absolute;left:1193.0px;top:737.5px;width:174.0px;height:1px;background:repeating-linear-gradient(to right,#80868b 0 2px,transparent 2px 4px)"></div>
<div class="t" style="top:721.15px;font-size:14px;line-height:14px;color:#5f6368;font-weight:400;letter-spacing:0.142px;right:432.36px;text-align:right;">Event count</div>

<div style="position:absolute;left:1445.0px;top:737.5px;width:77.5px;height:1px;background:repeating-linear-gradient(to right,#80868b 0 2px,transparent 2px 4px)"></div>
<div class="t" style="top:721.15px;font-size:14px;line-height:14px;color:#5f6368;font-weight:400;letter-spacing:0.144px;right:260.06px;text-align:right;">Conversions</div>

<div style="position:absolute;left:1613.4px;top:737.5px;width:81.4px;height:1px;background:repeating-linear-gradient(to right,#80868b 0 2px,transparent 2px 4px)"></div>
<div class="t" style="top:721.15px;font-size:14px;line-height:14px;color:#5f6368;font-weight:400;letter-spacing:0.326px;right:94.37px;text-align:right;">Total revenue</div>

<div style="position:absolute;left:1770.0px;top:737.5px;width:90.3px;height:1px;background:repeating-linear-gradient(to right,#80868b 0 2px,transparent 2px 4px)"></div>
<div class="t" style="top:743.15px;font-size:14px;line-height:14px;color:#5f6368;font-weight:400;letter-spacing:0.030px;left:1440.00px;">All events</div>

<svg style="position:absolute;left:1513px;top:746px" width="12" height="7"><path d="M1 1h9.5L5.75 5.8z" fill="#5f6368"/></svg>
<div class="t" style="top:743.15px;font-size:14px;line-height:14px;color:#5f6368;font-weight:400;letter-spacing:0.030px;left:1610.60px;">All events</div>

<svg style="position:absolute;left:1683px;top:746px" width="12" height="7"><path d="M1 1h9.5L5.75 5.8z" fill="#5f6368"/></svg>
<div class="t" style="top:785.95px;font-size:14px;line-height:14px;color:#202124;font-weight:400;letter-spacing:0.600px;right:1566.40px;text-align:right;-webkit-text-stroke:0.3px #202124;">2,628</div>

<div class="t" style="top:809.24px;font-size:12px;line-height:12px;color:#5f6368;font-weight:400;letter-spacing:0.530px;right:1566.47px;text-align:right;">100% of total</div>

<div class="t" style="top:785.95px;font-size:14px;line-height:14px;color:#202124;font-weight:400;letter-spacing:0.600px;right:1437.40px;text-align:right;-webkit-text-stroke:0.3px #202124;">2,643</div>

<div class="t" style="top:809.24px;font-size:12px;line-height:12px;color:#5f6368;font-weight:400;letter-spacing:0.530px;right:1437.47px;text-align:right;">100% of total</div>

<div class="t" style="top:785.95px;font-size:14px;line-height:14px;color:#202124;font-weight:400;letter-spacing:0.600px;right:1254.00px;text-align:right;-webkit-text-stroke:0.3px #202124;">1,541</div>

<div class="t" style="top:809.24px;font-size:12px;line-height:12px;color:#5f6368;font-weight:400;letter-spacing:0.530px;right:1254.07px;text-align:right;">100% of total</div>

<div class="t" style="top:785.95px;font-size:14px;line-height:14px;color:#202124;font-weight:400;letter-spacing:0.600px;right:1075.90px;text-align:right;-webkit-text-stroke:0.3px #202124;">42.83%</div>

<div class="t" style="top:809.24px;font-size:12px;line-height:12px;color:#5f6368;font-weight:400;letter-spacing:0.530px;right:1075.97px;text-align:right;">Avg 0%</div>

<div class="t" style="top:785.95px;font-size:14px;line-height:14px;color:#202124;font-weight:400;letter-spacing:0.600px;right:831.40px;text-align:right;-webkit-text-stroke:0.3px #202124;">0.59</div>

<div class="t" style="top:809.24px;font-size:12px;line-height:12px;color:#5f6368;font-weight:400;letter-spacing:0.530px;right:831.47px;text-align:right;">Avg 0%</div>

<div class="t" style="top:785.95px;font-size:14px;line-height:14px;color:#202124;font-weight:400;letter-spacing:0.600px;right:587.40px;text-align:right;-webkit-text-stroke:0.3px #202124;">8s</div>

<div class="t" style="top:809.24px;font-size:12px;line-height:12px;color:#5f6368;font-weight:400;letter-spacing:0.530px;right:587.47px;text-align:right;">Avg 0%</div>

<div class="t" style="top:785.95px;font-size:14px;line-height:14px;color:#202124;font-weight:400;letter-spacing:0.600px;right:417.40px;text-align:right;-webkit-text-stroke:0.3px #202124;">16,585</div>

<div class="t" style="top:809.24px;font-size:12px;line-height:12px;color:#5f6368;font-weight:400;letter-spacing:0.530px;right:417.47px;text-align:right;">100% of total</div>

<div class="t" style="top:785.95px;font-size:14px;line-height:14px;color:#202124;font-weight:400;letter-spacing:0.600px;right:247.40px;text-align:right;-webkit-text-stroke:0.3px #202124;">0.00</div>

<div class="t" style="top:785.95px;font-size:14px;line-height:14px;color:#202124;font-weight:400;letter-spacing:0.600px;right:93.90px;text-align:right;-webkit-text-stroke:0.3px #202124;">$0.00</div>

<div style="position:absolute;left:72px;top:831.30px;width:1805px;height:37.45px;background:#f8f9fa"></div>
<div style="position:absolute;left:72px;top:830.80px;width:1805px;height:1px;background:#dadce0"></div>
<div class="t" style="top:843.85px;font-size:14px;line-height:14px;color:#202124;font-weight:400;left:88.50px;">1</div>

<div class="t" style="top:843.85px;font-size:14px;line-height:14px;color:#202124;font-weight:400;letter-spacing:0.450px;left:132.80px;">Italy</div>

<div class="t" style="top:843.85px;font-size:14px;line-height:14px;color:#202124;font-weight:400;letter-spacing:0.450px;right:1566.55px;text-align:right;">804</div>

<div class="t" style="top:843.85px;font-size:14px;line-height:14px;color:#202124;font-weight:400;letter-spacing:0.450px;right:1437.55px;text-align:right;">813</div>

<div class="t" style="top:843.85px;font-size:14px;line-height:14px;color:#202124;font-weight:400;letter-spacing:0.450px;right:1254.15px;text-align:right;">551</div>

<div class="t" style="top:843.85px;font-size:14px;line-height:14px;color:#202124;font-weight:400;letter-spacing:0.050px;right:1076.45px;text-align:right;">43.76%</div>

<div class="t" style="top:843.85px;font-size:14px;line-height:14px;color:#202124;font-weight:400;letter-spacing:0.050px;right:831.95px;text-align:right;">0.69</div>

<div class="t" style="top:843.85px;font-size:14px;line-height:14px;color:#202124;font-weight:400;letter-spacing:0.450px;right:587.55px;text-align:right;">7s</div>

<div class="t" style="top:843.85px;font-size:14px;line-height:14px;color:#202124;font-weight:400;letter-spacing:0.450px;right:417.55px;text-align:right;">5,476</div>

<div class="t" style="top:843.85px;font-size:14px;line-height:14px;color:#202124;font-weight:400;letter-spacing:0.050px;right:247.95px;text-align:right;">0.00</div>

<div class="t" style="top:843.85px;font-size:14px;line-height:14px;color:#202124;font-weight:400;letter-spacing:0.050px;right:94.45px;text-align:right;">$0.00</div>

<div style="position:absolute;left:72px;top:868.25px;width:1805px;height:1px;background:#dadce0"></div>
<div class="t" style="top:881.30px;font-size:14px;line-height:14px;color:#202124;font-weight:400;left:88.50px;">2</div>

<div class="t" style="top:881.30px;font-size:14px;line-height:14px;color:#202124;font-weight:400;letter-spacing:0.450px;left:132.80px;">United States</div>

<div class="t" style="top:881.30px;font-size:14px;line-height:14px;color:#202124;font-weight:400;letter-spacing:0.450px;right:1566.55px;text-align:right;">190</div>

<div class="t" style="top:881.30px;font-size:14px;line-height:14px;color:#202124;font-weight:400;letter-spacing:0.450px;right:1437.55px;text-align:right;">188</div>

<div class="t" style="top:881.30px;font-size:14px;line-height:14px;color:#202124;font-weight:400;letter-spacing:0.450px;right:1254.15px;text-align:right;">58</div>

<div class="t" style="top:881.30px;font-size:14px;line-height:14px;color:#202124;font-weight:400;letter-spacing:0.050px;right:1076.45px;text-align:right;">28.57%</div>

<div class="t" style="top:881.30px;font-size:14px;line-height:14px;color:#202124;font-weight:400;letter-spacing:0.050px;right:831.95px;text-align:right;">0.31</div>

<div class="t" style="top:881.30px;font-size:14px;line-height:14px;color:#202124;font-weight:400;letter-spacing:0.450px;right:587.55px;text-align:right;">3s</div>

<div class="t" style="top:881.30px;font-size:14px;line-height:14px;color:#202124;font-weight:400;letter-spacing:0.450px;right:417.55px;text-align:right;">881</div>

<div class="t" style="top:881.30px;font-size:14px;line-height:14px;color:#202124;font-weight:400;letter-spacing:0.050px;right:247.95px;text-align:right;">0.00</div>

<div class="t" style="top:881.30px;font-size:14px;line-height:14px;color:#202124;font-weight:400;letter-spacing:0.050px;right:94.45px;text-align:right;">$0.00</div>

<div style="position:absolute;left:72px;top:906.20px;width:1805px;height:37.45px;background:#f8f9fa"></div>
<div style="position:absolute;left:72px;top:905.70px;width:1805px;height:1px;background:#dadce0"></div>
<div class="t" style="top:918.75px;font-size:14px;line-height:14px;color:#202124;font-weight:400;left:88.50px;">3</div>

<div class="t" style="top:918.75px;font-size:14px;line-height:14px;color:#202124;font-weight:400;letter-spacing:0.450px;left:132.80px;">Philippines</div>

<div class="t" style="top:918.75px;font-size:14px;line-height:14px;color:#202124;font-weight:400;letter-spacing:0.450px;right:1566.55px;text-align:right;">156</div>

<div class="t" style="top:918.75px;font-size:14px;line-height:14px;color:#202124;font-weight:400;letter-spacing:0.450px;right:1437.55px;text-align:right;">157</div>

<div class="t" style="top:918.75px;font-size:14px;line-height:14px;color:#202124;font-weight:400;letter-spacing:0.450px;right:1254.15px;text-align:right;">34</div>

<div class="t" style="top:918.75px;font-size:14px;line-height:14px;color:#202124;font-weight:400;letter-spacing:0.050px;right:1076.45px;text-align:right;">20.86%</div>

<div class="t" style="top:918.75px;font-size:14px;line-height:14px;color:#202124;font-weight:400;letter-spacing:0.050px;right:831.95px;text-align:right;">0.22</div>

<div class="t" style="top:918.75px;font-size:14px;line-height:14px;color:#202124;font-weight:400;letter-spacing:0.450px;right:587.55px;text-align:right;">1s</div>

<div class="t" style="top:918.75px;font-size:14px;line-height:14px;color:#202124;font-weight:400;letter-spacing:0.450px;right:417.55px;text-align:right;">544</div>

<div class="t" style="top:918.75px;font-size:14px;line-height:14px;color:#202124;font-weight:400;letter-spacing:0.050px;right:247.95px;text-align:right;">0.00</div>

<div class="t" style="top:918.75px;font-size:14px;line-height:14px;color:#202124;font-weight:400;letter-spacing:0.050px;right:94.45px;text-align:right;">$0.00</div>

<div style="position:absolute;left:72px;top:943.15px;width:1805px;height:1px;background:#dadce0"></div>
<div class="t" style="top:956.20px;font-size:14px;line-height:14px;color:#202124;font-weight:400;left:88.50px;">4</div>

<div class="t" style="top:956.20px;font-size:14px;line-height:14px;color:#202124;font-weight:400;letter-spacing:0.450px;left:132.80px;">Greece</div>

<div class="t" style="top:956.20px;font-size:14px;line-height:14px;color:#202124;font-weight:400;letter-spacing:0.450px;right:1566.55px;text-align:right;">141</div>

<div class="t" style="top:956.20px;font-size:14px;line-height:14px;color:#202124;font-weight:400;letter-spacing:0.450px;right:1437.55px;text-align:right;">141</div>

<div class="t" style="top:956.20px;font-size:14px;line-height:14px;color:#202124;font-weight:400;letter-spacing:0.450px;right:1254.15px;text-align:right;">88</div>

<div class="t" style="top:956.20px;font-size:14px;line-height:14px;color:#202124;font-weight:400;letter-spacing:0.050px;right:1076.45px;text-align:right;">48.89%</div>

<div class="t" style="top:956.20px;font-size:14px;line-height:14px;color:#202124;font-weight:400;letter-spacing:0.050px;right:831.95px;text-align:right;">0.62</div>

<div class="t" style="top:956.20px;font-size:14px;line-height:14px;color:#202124;font-weight:400;letter-spacing:0.450px;right:587.55px;text-align:right;">3s</div>

<div class="t" style="top:956.20px;font-size:14px;line-height:14px;color:#202124;font-weight:400;letter-spacing:0.450px;right:417.55px;text-align:right;">960</div>

<div class="t" style="top:956.20px;font-size:14px;line-height:14px;color:#202124;font-weight:400;letter-spacing:0.050px;right:247.95px;text-align:right;">0.00</div>

<div class="t" style="top:956.20px;font-size:14px;line-height:14px;color:#202124;font-weight:400;letter-spacing:0.050px;right:94.45px;text-align:right;">$0.00</div>

<div style="position:absolute;left:72px;top:981.10px;width:1805px;height:37.45px;background:#f8f9fa"></div>
<div style="position:absolute;left:72px;top:980.60px;width:1805px;height:1px;background:#dadce0"></div>
<div class="t" style="top:993.65px;font-size:14px;line-height:14px;color:#202124;font-weight:400;left:88.50px;">5</div>

<div class="t" style="top:993.65px;font-size:14px;line-height:14px;color:#202124;font-weight:400;letter-spacing:0.450px;left:132.80px;">United Kingdom</div>

<div class="t" style="top:993.65px;font-size:14px;line-height:14px;color:#202124;font-weight:400;letter-spacing:0.450px;right:1566.55px;text-align:right;">100</div>

<div class="t" style="top:993.65px;font-size:14px;line-height:14px;color:#202124;font-weight:400;letter-spacing:0.450px;right:1437.55px;text-align:right;">97</div>

<div class="t" style="top:993.65px;font-size:14px;line-height:14px;color:#202124;font-weight:400;letter-spacing:0.450px;right:1254.15px;text-align:right;">58</div>

<div class="t" style="top:993.65px;font-size:14px;line-height:14px;color:#202124;font-weight:400;letter-spacing:0.050px;right:1076.45px;text-align:right;">46.77%</div>

<div class="t" style="top:993.65px;font-size:14px;line-height:14px;color:#202124;font-weight:400;letter-spacing:0.050px;right:831.95px;text-align:right;">0.58</div>

<div class="t" style="top:993.65px;font-size:14px;line-height:14px;color:#202124;font-weight:400;letter-spacing:0.450px;right:587.55px;text-align:right;">16s</div>

<div class="t" style="top:993.65px;font-size:14px;line-height:14px;color:#202124;font-weight:400;letter-spacing:0.450px;right:417.55px;text-align:right;">653</div>

<div class="t" style="top:993.65px;font-size:14px;line-height:14px;color:#202124;font-weight:400;letter-spacing:0.050px;right:247.95px;text-align:right;">0.00</div>

<div class="t" style="top:993.65px;font-size:14px;line-height:14px;color:#202124;font-weight:400;letter-spacing:0.050px;right:94.45px;text-align:right;">$0.00</div>

<div style="position:absolute;left:72px;top:1018.05px;width:1805px;height:1px;background:#dadce0"></div>
<div class="t" style="top:1031.10px;font-size:14px;line-height:14px;color:#202124;font-weight:400;left:88.50px;">6</div>

<div class="t" style="top:1031.10px;font-size:14px;line-height:14px;color:#202124;font-weight:400;letter-spacing:0.450px;left:132.80px;">Türkiye</div>

<div class="t" style="top:1031.10px;font-size:14px;line-height:14px;color:#202124;font-weight:400;letter-spacing:0.450px;right:1566.55px;text-align:right;">94</div>

<div class="t" style="top:1031.10px;font-size:14px;line-height:14px;color:#202124;font-weight:400;letter-spacing:0.450px;right:1437.55px;text-align:right;">95</div>

<div class="t" style="top:1031.10px;font-size:14px;line-height:14px;color:#202124;font-weight:400;letter-spacing:0.450px;right:1254.15px;text-align:right;">63</div>

<div class="t" style="top:1031.10px;font-size:14px;line-height:14px;color:#202124;font-weight:400;letter-spacing:0.050px;right:1076.45px;text-align:right;">52.07%</div>

<div class="t" style="top:1031.10px;font-size:14px;line-height:14px;color:#202124;font-weight:400;letter-spacing:0.050px;right:831.95px;text-align:right;">0.67</div>

<div class="t" style="top:1031.10px;font-size:14px;line-height:14px;color:#202124;font-weight:400;letter-spacing:0.450px;right:587.55px;text-align:right;">14s</div>

<div class="t" style="top:1031.10px;font-size:14px;line-height:14px;color:#202124;font-weight:400;letter-spacing:0.450px;right:417.55px;text-align:right;">699</div>

<div class="t" style="top:1031.10px;font-size:14px;line-height:14px;color:#202124;font-weight:400;letter-spacing:0.050px;right:247.95px;text-align:right;">0.00</div>

<div class="t" style="top:1031.10px;font-size:14px;line-height:14px;color:#202124;font-weight:400;letter-spacing:0.050px;right:94.45px;text-align:right;">$0.00</div>

<div style="position:absolute;left:72px;top:1056.00px;width:1805px;height:37.45px;background:#f8f9fa"></div>
<div style="position:absolute;left:72px;top:1055.50px;width:1805px;height:1px;background:#dadce0"></div>
<div class="t" style="top:1068.55px;font-size:14px;line-height:14px;color:#202124;font-weight:400;left:88.50px;">7</div>

<div class="t" style="top:1068.55px;font-size:14px;line-height:14px;color:#202124;font-weight:400;letter-spacing:0.450px;left:132.80px;">Germany</div>

<div class="t" style="top:1068.55px;font-size:14px;line-height:14px;color:#202124;font-weight:400;letter-spacing:0.450px;right:1566.55px;text-align:right;">84</div>

<div class="t" style="top:1068.55px;font-size:14px;line-height:14px;color:#202124;font-weight:400;letter-spacing:0.450px;right:1437.55px;text-align:right;">82</div>

<div class="t" style="top:1068.55px;font-size:14px;line-height:14px;color:#202124;font-weight:400;letter-spacing:0.450px;right:1254.15px;text-align:right;">62</div>

<div class="t" style="top:1068.55px;font-size:14px;line-height:14px;color:#202124;font-weight:400;letter-spacing:0.050px;right:1076.45px;text-align:right;">51.67%</div>

<div class="t" style="top:1068.55px;font-size:14px;line-height:14px;color:#202124;font-weight:400;letter-spacing:0.050px;right:831.95px;text-align:right;">0.74</div>

<div class="t" style="top:1068.55px;font-size:14px;line-height:14px;color:#202124;font-weight:400;letter-spacing:0.450px;right:587.55px;text-align:right;">10s</div>

<div class="t" style="top:1068.55px;font-size:14px;line-height:14px;color:#202124;font-weight:400;letter-spacing:0.450px;right:417.55px;text-align:right;">570</div>

<div class="t" style="top:1068.55px;font-size:14px;line-height:14px;color:#202124;font-weight:400;letter-spacing:0.050px;right:247.95px;text-align:right;">0.00</div>

<div class="t" style="top:1068.55px;font-size:14px;line-height:14px;color:#202124;font-weight:400;letter-spacing:0.050px;right:94.45px;text-align:right;">$0.00</div>

<div style="position:absolute;left:72px;top:1092.95px;width:1805px;height:1px;background:#dadce0"></div>
<div class="t" style="top:1106.00px;font-size:14px;line-height:14px;color:#202124;font-weight:400;left:88.50px;">8</div>

<div class="t" style="top:1106.00px;font-size:14px;line-height:14px;color:#202124;font-weight:400;letter-spacing:0.450px;left:132.80px;">France</div>

<div class="t" style="top:1106.00px;font-size:14px;line-height:14px;color:#202124;font-weight:400;letter-spacing:0.450px;right:1566.55px;text-align:right;">70</div>

<div class="t" style="top:1106.00px;font-size:14px;line-height:14px;color:#202124;font-weight:400;letter-spacing:0.450px;right:1437.55px;text-align:right;">70</div>

<div class="t" style="top:1106.00px;font-size:14px;line-height:14px;color:#202124;font-weight:400;letter-spacing:0.450px;right:1254.15px;text-align:right;">43</div>

<div class="t" style="top:1106.00px;font-size:14px;line-height:14px;color:#202124;font-weight:400;letter-spacing:0.050px;right:1076.45px;text-align:right;">39.45%</div>

<div class="t" style="top:1106.00px;font-size:14px;line-height:14px;color:#202124;font-weight:400;letter-spacing:0.050px;right:831.95px;text-align:right;">0.61</div>

<div class="t" style="top:1106.00px;font-size:14px;line-height:14px;color:#202124;font-weight:400;letter-spacing:0.450px;right:587.55px;text-align:right;">5s</div>

<div class="t" style="top:1106.00px;font-size:14px;line-height:14px;color:#202124;font-weight:400;letter-spacing:0.450px;right:417.55px;text-align:right;">503</div>

<div class="t" style="top:1106.00px;font-size:14px;line-height:14px;color:#202124;font-weight:400;letter-spacing:0.050px;right:247.95px;text-align:right;">0.00</div>

<div class="t" style="top:1106.00px;font-size:14px;line-height:14px;color:#202124;font-weight:400;letter-spacing:0.050px;right:94.45px;text-align:right;">$0.00</div>

<div style="position:absolute;left:72px;top:1130.90px;width:1805px;height:37.45px;background:#f8f9fa"></div>
<div style="position:absolute;left:72px;top:1130.40px;width:1805px;height:1px;background:#dadce0"></div>
<div class="t" style="top:1143.45px;font-size:14px;line-height:14px;color:#202124;font-weight:400;left:88.50px;">9</div>

<div class="t" style="top:1143.45px;font-size:14px;line-height:14px;color:#202124;font-weight:400;letter-spacing:0.450px;left:132.80px;">Croatia</div>

<div class="t" style="top:1143.45px;font-size:14px;line-height:14px;color:#202124;font-weight:400;letter-spacing:0.450px;right:1566.55px;text-align:right;">66</div>

<div class="t" style="top:1143.45px;font-size:14px;line-height:14px;color:#202124;font-weight:400;letter-spacing:0.450px;right:1437.55px;text-align:right;">65</div>

<div class="t" style="top:1143.45px;font-size:14px;line-height:14px;color:#202124;font-weight:400;letter-spacing:0.450px;right:1254.15px;text-align:right;">39</div>

<div class="t" style="top:1143.45px;font-size:14px;line-height:14px;color:#202124;font-weight:400;letter-spacing:0.050px;right:1076.45px;text-align:right;">44.83%</div>

<div class="t" style="top:1143.45px;font-size:14px;line-height:14px;color:#202124;font-weight:400;letter-spacing:0.050px;right:831.95px;text-align:right;">0.59</div>

<div class="t" style="top:1143.45px;font-size:14px;line-height:14px;color:#202124;font-weight:400;letter-spacing:0.450px;right:587.55px;text-align:right;">3s</div>

<div class="t" style="top:1143.45px;font-size:14px;line-height:14px;color:#202124;font-weight:400;letter-spacing:0.450px;right:417.55px;text-align:right;">446</div>

<div class="t" style="top:1143.45px;font-size:14px;line-height:14px;color:#202124;font-weight:400;letter-spacing:0.050px;right:247.95px;text-align:right;">0.00</div>

<div class="t" style="top:1143.45px;font-size:14px;line-height:14px;color:#202124;font-weight:400;letter-spacing:0.050px;right:94.45px;text-align:right;">$0.00</div>

<div style="position:absolute;left:72px;top:1167.85px;width:1805px;height:1px;background:#dadce0"></div>
<div class="t" style="top:1180.90px;font-size:14px;line-height:14px;color:#202124;font-weight:400;left:88.50px;">10</div>

<div class="t" style="top:1180.90px;font-size:14px;line-height:14px;color:#202124;font-weight:400;letter-spacing:0.450px;left:132.80px;">India</div>

<div class="t" style="top:1180.90px;font-size:14px;line-height:14px;color:#202124;font-weight:400;letter-spacing:0.450px;right:1566.55px;text-align:right;">65</div>

<div class="t" style="top:1180.90px;font-size:14px;line-height:14px;color:#202124;font-weight:400;letter-spacing:0.450px;right:1437.55px;text-align:right;">66</div>

<div class="t" style="top:1180.90px;font-size:14px;line-height:14px;color:#202124;font-weight:400;letter-spacing:0.450px;right:1254.15px;text-align:right;">18</div>

<div class="t" style="top:1180.90px;font-size:14px;line-height:14px;color:#202124;font-weight:400;letter-spacing:0.050px;right:1076.45px;text-align:right;">24.32%</div>

<div class="t" style="top:1180.90px;font-size:14px;line-height:14px;color:#202124;font-weight:400;letter-spacing:0.050px;right:831.95px;text-align:right;">0.28</div>

<div class="t" style="top:1180.90px;font-size:14px;line-height:14px;color:#202124;font-weight:400;letter-spacing:0.450px;right:587.55px;text-align:right;">29s</div>

<div class="t" style="top:1180.90px;font-size:14px;line-height:14px;color:#202124;font-weight:400;letter-spacing:0.450px;right:417.55px;text-align:right;">276</div>

<div class="t" style="top:1180.90px;font-size:14px;line-height:14px;color:#202124;font-weight:400;letter-spacing:0.050px;right:247.95px;text-align:right;">0.00</div>

<div class="t" style="top:1180.90px;font-size:14px;line-height:14px;color:#202124;font-weight:400;letter-spacing:0.050px;right:94.45px;text-align:right;">$0.00</div>

<div style="position:absolute;left:282.3px;top:704px;width:1px;height:502.5px;background:#dadce0"></div>
<div class="t" style="top:1257.85px;font-size:14px;line-height:14px;color:#5f6368;font-weight:400;letter-spacing:0.524px;left:675.70px;">© 2024 Google</div>

<div class="t" style="top:1257.85px;font-size:14px;line-height:14px;color:#3c4043;font-weight:400;left:781.50px;">|</div>

<div class="t" style="top:1257.85px;font-size:14px;line-height:14px;color:#1a66d2;font-weight:400;letter-spacing:0.676px;left:789.20px;">Analytics home</div>

<div class="t" style="top:1257.85px;font-size:14px;line-height:14px;color:#3c4043;font-weight:400;left:897.50px;">|</div>

<div class="t" style="top:1257.85px;font-size:14px;line-height:14px;color:#1a66d2;font-weight:400;letter-spacing:0.622px;left:904.20px;">Terms of Service</div>

<div class="t" style="top:1257.85px;font-size:14px;line-height:14px;color:#3c4043;font-weight:400;left:1023.50px;">|</div>

<div class="t" style="top:1257.85px;font-size:14px;line-height:14px;color:#1a66d2;font-weight:400;letter-spacing:0.562px;left:1031.10px;">Privacy Policy</div>

<div class="t" style="top:1257.85px;font-size:14px;line-height:14px;color:#3c4043;font-weight:400;left:1130.70px;">|</div>

<svg style="position:absolute;left:1142px;top:1258px" width="17" height="17" viewBox="0 0 17 17"><path d="M2 2.2h13v9.6H5l-3 3z" fill="none" stroke="#5f6368" stroke-width="1.6" stroke-linejoin="round"/><path d="M8.5 4.5v3.6M8.5 9.2v1" stroke="#5f6368" stroke-width="1.5"/></svg>
<div class="t" style="top:1257.85px;font-size:14px;line-height:14px;color:#5f6368;font-weight:400;letter-spacing:0.692px;left:1165.00px;">Send feedback</div>

</body></html>
